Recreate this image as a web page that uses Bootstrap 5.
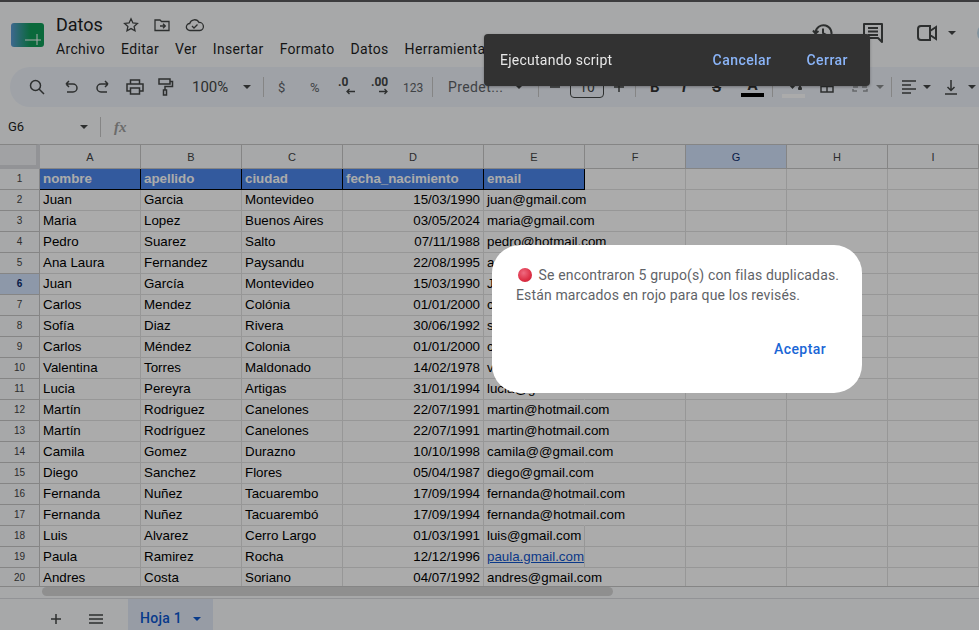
<!DOCTYPE html>
<html lang="es">
<head>
  <meta charset="UTF-8">
  <meta name="viewport" content="width=device-width, initial-scale=1">
  <title>Datos</title>
  <link href="https://cdn.jsdelivr.net/npm/bootstrap@5.3.0/dist/css/bootstrap.min.css" rel="stylesheet">
  <style>
    html, body { height: 100%; overflow: hidden; }
    body { background: #f9fbfd; font-family: Roboto, "Liberation Sans", sans-serif; color: #1f1f1f; }
    .hoja { width: 979px; height: 630px; overflow: hidden; }
    .cabecera { height: 67px; padding: 12px 0 0 11px; }
    .logo { width: 33px; height: 24px; margin-top: 11px; flex: none; }
    .titulo-zona { margin-left: 12px; }
    .doc-nombre { font-size: 18px; line-height: 24px; height: 25px; gap: 14px; }
    .doc-nombre span { width: 53px; }
    .menu-fila { font-size: 14px; line-height: 20px; gap: 16px; margin-top: 2px; white-space: nowrap; letter-spacing: .32px; }
    .derecha { position: absolute; top: 22px; left: 812px; width: 187px; }
    .derecha svg { flex: none; }
    .hueco-a { margin-left: 28px; }
    .hueco-b { margin-left: 32px; }
    .hueco-c { margin-left: 10px; }
    .hueco-d { margin-left: 21px; }
    .borde-azul { width: 20px; height: 20px; border-radius: 50%; background: #c2dcec; flex: none; }
    .barra { height: 40px; margin-left: 10px; width: 969px; background: #edf2fa; border-radius: 20px 0 0 20px; font-size: 14px; color: #444746; white-space: nowrap; }
    .barra svg { display: block; }
    .item { flex: none; }
    .sep { width: 1px; height: 20px; background: #c7c7c7; flex: none; }
    .suave { color: #5f6368; font-size: 13px; }
    .numeros { color: #5f6368; font-size: 12px; }
    .fuente { color: #5f6368; font-size: 14px; letter-spacing: .4px; }
    .cien { font-size: 15px; }
    .decimal { font-size: 12px; font-weight: 700; line-height: 11px; margin-top: -2px; }
    .caja-fuente { height: 22px; border: 1px solid #444746; border-radius: 4px; font-size: 14px; }
    .letra { font-size: 15px; font-weight: 700; color: #333; }
    .barra-color { height: 4px; width: 100%; }
    .caja-relleno { padding-top: 7px; }
    .formula { height: 37px; padding: 3px 0 0 8px; font-size: 13px; }
    .celda-ref { width: 72px; }
    .formula .sep { margin-left: 12px; }
    .fx { font-family: "Liberation Serif", serif; font-style: italic; font-weight: 700; color: #a0a0a0; font-size: 15px; margin-left: 13px; }
    .grilla-caja { height: 442px; overflow: hidden; }
    .grilla { border-collapse: separate; border-spacing: 0; table-layout: fixed; width: 979px; font-family: "Liberation Sans", sans-serif; font-size: 13.33px; color: #000; background: #fff; }
    .grilla th, .grilla td { height: 21px; padding: 0 3px; border-right: 1px solid #e1e1e1; border-bottom: 1px solid #e1e1e1; white-space: nowrap; overflow: hidden; line-height: 20px; }
    .grilla thead th { height: 25px; background: #f9fbfd; font-weight: 400; font-size: 11px; color: #444; text-align: center; border-color: #c7c7c7; border-top: 1px solid #c7c7c7; }
    .grilla tbody th { background: #f9fbfd; font-weight: 400; font-size: 10px; color: #444; text-align: center; border-color: #c7c7c7; }
    .grilla thead th.esquina { background: #f0f2f5; border-right: 4px solid #dadce0; border-bottom: 4px solid #dadce0; }
    .grilla thead th.activa, .grilla tbody th.activa { background: #d3e3fd; color: #0b2a6b; }
    .grilla tbody th.activa { font-weight: 700; }
    .grilla td.enc { background: #4c87ec; color: #fff; font-weight: 700; border-right: 1px solid #000; border-bottom: 1px solid #000; }
    .grilla td.der { text-align: right; }
    .grilla td.corre { overflow: visible; border-right-color: transparent; }
    .grilla a { color: #1155cc; }
    .barra-scroll { height: 12px; background: #f9fbfd; border-top: 1px solid #c7c7c7; padding-left: 42px; }
    .barra-scroll div { width: 571px; height: 9px; background: #d6d6d6; border-radius: 5px; }
    .pestanas { height: 32px; background: #f9fbfd; border-top: 1px solid #dadce0; padding-left: 49px; color: #444746; }
    .pestanas > svg { margin-top: 8px; }
    .mas { margin-right: 25px; }
    .pestana { margin-left: 24px; width: 85px; height: 100%; padding-top: 8px; background: #e1e9f7; color: #0b57d0; font-size: 14px; font-weight: 500; gap: 11px; letter-spacing: .3px; }
    .velo { position: fixed; inset: 0; background: rgba(0,0,0,.33); }
    .linea-top { position: fixed; left: 0; right: 0; top: 0; height: 2px; background: #3c3c3e; }
    .aviso { position: fixed; left: 484px; top: 34px; width: 386px; height: 52px; background: #323232; border-radius: 4px; padding: 0 22px 0 16px; color: #e8e8e8; font-size: 14px; letter-spacing: .25px; box-shadow: 0 1px 3px rgba(0,0,0,.3); }
    .aviso b { color: #8ab4f8; font-weight: 500; margin-left: 35px; letter-spacing: .45px; }
    .dialogo { position: fixed; left: 492px; top: 245px; width: 370px; height: 148px; background: #fff; border-radius: 28px; padding: 20px 12px 20px 24px; font-size: 14px; line-height: 20px; color: #5f6368; letter-spacing: .14px; white-space: nowrap; }
    .punto { display: inline-block; width: 14px; height: 14px; border-radius: 50%; vertical-align: -2px; margin: 0 3px 0 2px; background: radial-gradient(circle at 40% 35%, #ef6a80, #dd2e44 60%, #b81f36); }
    .aceptar { position: absolute; right: 36px; top: 94px; color: #1a66d6; font-weight: 500; letter-spacing: .4px; }
  </style>
</head>
<body>
  <div class="hoja">
    <div class="cabecera d-flex">
      <svg class="logo" viewBox="0 0 33 24"><defs><linearGradient id="lg" x1="0" x2="1"><stop offset="0" stop-color="#5b9bd5"/><stop offset=".6" stop-color="#0f9d58"/></linearGradient></defs><rect width="33" height="24" rx="3" fill="url(#lg)"/><path d="M14 17h16M26 11v11" stroke="#fff" stroke-width="1" fill="none"/></svg>
      <div class="titulo-zona">
        <div class="doc-nombre d-flex align-items-center">
          <span>Datos</span>
          <svg width="16" height="16" viewBox="0 0 16 16" fill="none" stroke="#444746" stroke-width="1.300"><path d="M8 1.800l1.900 4.100 4.500.5-3.300 3 .9 4.400L8 11.600l-4 2.200.9-4.400-3.300-3 4.500-.5z"/></svg>
          <svg width="18" height="16" viewBox="0 0 18 16" fill="none" stroke="#444746" stroke-width="1.300"><path d="M2 3h5l1.500 1.500H16v9H2zM7 9h5M10 6.800L12.300 9 10 11.200"/></svg>
          <svg width="20" height="16" viewBox="0 0 20 16" fill="none" stroke="#444746" stroke-width="1.300"><path d="M5 13.500a3.500 3.500 0 0 1-.3-7A5 5 0 0 1 14 5.500a4 4 0 0 1 .8 8zM7 9l2 2 3.500-3.500"/></svg>
        </div>
        <div class="menu-fila d-flex"><span>Archivo</span><span>Editar</span><span>Ver</span><span>Insertar</span><span>Formato</span><span>Datos</span><span>Herramientas</span></div>
      </div>
      <div class="derecha d-flex align-items-center">
        <svg width="22" height="22" viewBox="0 0 22 22" fill="none" stroke="#444746" stroke-width="2"><path d="M3.500 11a8 8 0 1 1 2.500 6M1 8.500l2.500 3 3-2.500M11 6.500V11l3.500 2"/></svg>
        <svg class="hueco-a" width="22" height="22" viewBox="0 0 22 22" fill="none" stroke="#444746" stroke-width="2"><path d="M2 2h18v14h0v4l-4-4H2zM6 6h10M6 9.500h10M6 13h10" stroke-linejoin="round"/></svg>
        <svg class="hueco-b" width="22" height="18" viewBox="0 0 22 18" fill="none" stroke="#444746" stroke-width="2"><path d="M2 5a3 3 0 0 1 3-3h9v14H5a3 3 0 0 1-3-3zM14 7l6-4v12l-6-4"/></svg>
        <svg class="hueco-c" width="8" height="4" viewBox="0 0 8 4"><path d="M0 0h8L4 4z" fill="#444746"/></svg>
        <div class="borde-azul hueco-d"></div>
      </div>
    </div>
    <div class="barra d-flex align-items-center" id="barra"></div>
    <div class="formula d-flex align-items-center">
      <span class="celda-ref">G6</span>
      <svg width="8" height="4" viewBox="0 0 8 4"><path d="M0 0h8L4 4z" fill="#444746"/></svg>
      <div class="sep"></div>
      <span class="fx">fx</span>
    </div>
    <div class="grilla-caja"><table class="grilla" id="grilla"></table></div>
    <div class="barra-scroll"><div></div></div>
    <div class="pestanas d-flex align-items-center">
      <svg class="mas" width="14" height="14" viewBox="0 0 14 14" stroke="#444746" stroke-width="1.500"><path d="M7 2v10M2 7h10"/></svg>
      <svg width="16" height="12" viewBox="0 0 16 12" stroke="#444746" stroke-width="1.500"><path d="M1 2h14M1 6h14M1 10h14"/></svg>
      <div class="pestana d-flex align-items-center justify-content-center">Hoja 1 <svg width="8" height="4" viewBox="0 0 8 4"><path d="M0 0h8L4 4z" fill="#0b57d0"/></svg></div>
    </div>
  </div>

  <div class="velo"></div>
  <div class="linea-top"></div>

  <div class="aviso d-flex align-items-center justify-content-between">
    <span>Ejecutando script</span>
    <div><b>Cancelar</b><b>Cerrar</b></div>
  </div>

  <div class="dialogo">
    <div><span class="punto"></span> Se encontraron 5 grupo(s) con filas duplicadas.<br>Están marcados en rojo para que los revisés.</div>
    <div class="aceptar">Aceptar</div>
  </div>

  <script>
    // barra de herramientas: [x, ancho, contenido]
    const icono = (w, h, d, extra = "") => `<svg width="${w}" height="${h}" viewBox="0 0 ${w} ${h}" fill="none" stroke="#444746" stroke-width="1.500" ${extra}><path d="${d}"/></svg>`;
    const triangulo = (color = "#444746") => `<svg width="8" height="4" viewBox="0 0 8 4"><path d="M0 0h8L4 4z" fill="${color}"/></svg>`;
    const sep = '<div class="sep"></div>';
    const flecha = d => `<svg class="ms-auto" width="9" height="7" viewBox="0 0 9 7" fill="none" stroke="#444746" stroke-width="1.300"><path d="${d}"/></svg>`;
    const relleno = '<svg width="23" height="6" viewBox="0 0 23 6"><path d="M6 0h9l-4.500 5zM18 1c1 1.500 2 2.500 2 3.500a2 2 0 0 1-4 0c0-1 1-2 2-3.500z" fill="#444746"/></svg>';
    const items = [
      [29, 16, icono(16, 16, "M6.500 1.500a5 5 0 1 1 0 10a5 5 0 0 1 0-10zM10 10l5 5")],
      [64, 14, icono(14, 14, "M2 4h7a3.800 3.800 0 0 1 0 8H3M2 4l3-3M2 4l3 3")],
      [96, 14, icono(14, 14, "M12 4H5a3.800 3.800 0 0 0 0 8h6M12 4L9 1M12 4L9 7")],
      [126, 18, icono(18, 16, "M4.500 5V1h9v4M4.500 12H1V5h16v7h-3.500M4.500 9h9v6h-9z")],
      [158, 16, icono(16, 18, "M1 1h11v5H1zM12 3.500h2.500V8.500H7v3.500M5.500 12h3v5h-3z")],
      [192, 36, '<span class="cien">100%</span>'],
      [243, 8, triangulo()],
      [263, 1, sep],
      [278, 8, '<span class="suave">$</span>'],
      [310, 11, '<span class="suave">%</span>'],
      [338, 17, `<div class="d-flex flex-column decimal"><span>.0</span>${flecha("M9 3.500H1M3.500 1L1 3.500 3.500 6")}</div>`],
      [371, 17, `<div class="d-flex flex-column decimal"><span>.00</span>${flecha("M0 3.500h8M5.500 1L8 3.500 5.500 6")}</div>`],
      [403, 18, '<span class="numeros">123</span>'],
      [432, 1, sep],
      [448, 60, '<span class="fuente">Predet...</span>'],
      [515, 8, triangulo()],
      [538, 1, sep],
      [550, 10, icono(10, 2, "M0 1h10")],
      [570, 34, '<div class="caja-fuente d-flex align-items-center justify-content-center">10</div>'],
      [614, 10, icono(10, 10, "M5 0v10M0 5h10")],
      [635, 1, sep],
      [650, 10, '<span class="letra">B</span>'],
      [682, 8, '<span class="letra fst-italic">I</span>'],
      [712, 11, '<span class="letra text-decoration-line-through">S</span>'],
      [741, 23, '<div class="d-flex flex-column align-items-center"><span class="letra lh-1">A</span><div class="barra-color bg-black"></div></div>'],
      [772, 1, sep],
      [782, 23, `<div class="d-flex flex-column align-items-center caja-relleno">${relleno}<div class="barra-color bg-white mt-1"></div></div>`],
      [820, 14, icono(14, 12, "M1 1h12v10H1zM1 5.500h12M7 1v10")],
      [852, 16, icono(16, 10, "M1 3V1h4M1 7v2h4M15 3V1h-4M15 7v2h-4M1 5h5M15 5h-5", 'opacity=".5"')],
      [876, 8, triangulo("#8a8c8e")],
      [891, 1, sep],
      [902, 14, icono(14, 14, "M0 1h14M0 5h9M0 9h14M0 13h9")],
      [923, 8, triangulo()],
      [945, 12, icono(12, 15, "M6 0v10M2.500 7L6 10.500 9.500 7M0 14h12")],
      [968, 8, triangulo()]
    ];
    let fin = 10;
    const barra = document.getElementById("barra");
    items.forEach(([x, ancho, contenido]) => {
      const el = document.createElement("div");
      el.className = "item";
      el.style.width = ancho + "px";
      el.style.marginLeft = (x - fin) + "px";
      el.innerHTML = contenido;
      barra.appendChild(el);
      fin = x + ancho;
    });

    const filas = [
      ["Juan","Garcia","Montevideo","15/03/1990","juan@gmail.com"],
      ["Maria","Lopez","Buenos Aires","03/05/2024","maria@gmail.com"],
      ["Pedro","Suarez","Salto","07/11/1988","pedro@hotmail.com"],
      ["Ana Laura","Fernandez","Paysandu","22/08/1995","ana@gmail.com"],
      ["Juan","García","Montevideo","15/03/1990","Juan@gmail.com"],
      ["Carlos","Mendez","Colónia","01/01/2000","carlos@gmail.com"],
      ["Sofía","Diaz","Rivera","30/06/1992","sofia@gmail.com"],
      ["Carlos","Méndez","Colonia","01/01/2000","carlos@gmail.com"],
      ["Valentina","Torres","Maldonado","14/02/1978","valentina@gmail.com"],
      ["Lucia","Pereyra","Artigas","31/01/1994","lucia@gmail.com"],
      ["Martín","Rodriguez","Canelones","22/07/1991","martin@hotmail.com"],
      ["Martín","Rodríguez","Canelones","22/07/1991","martin@hotmail.com"],
      ["Camila","Gomez","Durazno","10/10/1998","camila@@gmail.com"],
      ["Diego","Sanchez","Flores","05/04/1987","diego@gmail.com"],
      ["Fernanda","Nuñez","Tacuarembo","17/09/1994","fernanda@hotmail.com"],
      ["Fernanda","Nuñez","Tacuarembó","17/09/1994","fernanda@hotmail.com"],
      ["Luis","Alvarez","Cerro Largo","01/03/1991","luis@gmail.com"],
      ["Paula","Ramirez","Rocha","12/12/1996","paula.gmail.com"],
      ["Andres","Costa","Soriano","04/07/1992","andres@gmail.com"]
    ];
    const anchos = [40,101,101,101,141,101,101,101,101,91];
    let html = "<colgroup>" + anchos.map(a => `<col style="width:${a}px">`).join("") + "</colgroup>";
    html += '<thead><tr><th class="esquina"></th>' + "ABCDEFGHI".split("").map(l => `<th${l === "G" ? ' class="activa"' : ""}>${l}</th>`).join("") + "</tr></thead><tbody>";
    html += '<tr><th>1</th>' + ["nombre","apellido","ciudad","fecha_nacimiento","email"].map(t => `<td class="enc">${t}</td>`).join("") + "<td></td><td></td><td></td><td></td></tr>";
    filas.forEach((f, i) => {
      const esLink = !f[4].includes("@");
      const correo = esLink ? `<a href="#">${f[4]}</a>` : f[4];
      const largo = !esLink && f[0] !== "Luis" ? ' class="corre"' : "";
      html += `<tr><th${i === 4 ? ' class="activa"' : ""}>${i + 2}</th><td>${f[0]}</td><td>${f[1]}</td><td>${f[2]}</td><td class="der">${f[3]}</td><td${largo}>${correo}</td><td></td><td></td><td></td><td></td></tr>`;
    });
    document.getElementById("grilla").innerHTML = html + "</tbody>";
  </script>
  <script src="https://cdn.jsdelivr.net/npm/bootstrap@5.3.0/dist/js/bootstrap.bundle.min.js"></script>
</body>
</html>
